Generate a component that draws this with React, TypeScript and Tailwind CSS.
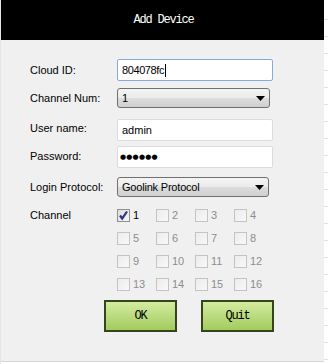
import React from "react";

const mono = { fontFamily: '"Liberation Mono", "DejaVu Sans Mono", monospace' };
const sans = { fontFamily: '"Liberation Sans", Arial, sans-serif' };

function Arrow() {
  return (
    <svg width="9" height="5" viewBox="0 0 9 5" className="shrink-0">
      <path d="M0 0 L9 0 L4.5 5 Z" fill="#000" />
    </svg>
  );
}

function Box({ checked }: { checked?: boolean }) {
  return (
    <div
      className={
        "w-[13px] h-[13px] border flex items-center justify-center shrink-0 " +
        (checked
          ? "border-[#8e8f8f] bg-gradient-to-br from-[#dcdcdc] to-[#f7f7f7]"
          : "border-[#c4c4c4] bg-gradient-to-br from-[#ececec] to-[#f8f8f8]")
      }
    >
      {checked && (
        <svg width="11" height="11" viewBox="0 0 11 11">
          <path d="M2 5.5 L4.2 8.5 L9 1.5" fill="none" stroke="#2a3380" strokeWidth="2.2" />
        </svg>
      )}
    </div>
  );
}

function Select({ text, w }: { text: string; w: string }) {
  return (
    <div
      className={
        "h-[20px] " +
        w +
        " border border-[#707070] rounded-[3px] flex items-center justify-between pl-[4px] pr-[4px] bg-[linear-gradient(to_bottom,#f4f4f4_0%,#ebebeb_50%,#dddddd_50%,#cfcfcf_100%)]"
      }
    >
      <span className="text-[11px] text-black tracking-[-0.2px]" style={sans}>
        {text}
      </span>
      <Arrow />
    </div>
  );
}

const lines = Array.from({ length: 22 }, (_, i) => i);

export default function App() {
  const labelCls = "w-[87px] text-[11px] text-black shrink-0";
  return (
    <div className="w-[328px] h-[364px] flex bg-white overflow-hidden" style={sans}>
      <div className="w-[1px] bg-[#e6e6e6]" />
      <div className="w-[323px] flex flex-col">
        <div className="h-[40px] bg-black flex items-center justify-center">
          <span className="text-white text-[12px] tracking-[-1.2px] pl-[2px]" style={mono}>
            Add Device
          </span>
        </div>
        <div className="h-[321px] bg-[#f0f0f0] flex flex-col pl-[29px]">
          {/* Cloud ID */}
          <div className="flex items-center mt-[19px]">
            <div className={labelCls}>Cloud ID:</div>
            <div className="w-[156px] h-[22px] border border-[#86abd9] rounded-[2px] bg-white flex items-center pl-[4px]">
              <span className="text-[11px] text-black tracking-[-0.4px]">804078fc</span>
              <span className="w-[1px] h-[13px] bg-black ml-[1px]" />
            </div>
          </div>
          {/* Channel Num */}
          <div className="flex items-center mt-[7px]">
            <div className={labelCls}>Channel Num:</div>
            <Select text="1" w="w-[153px]" />
          </div>
          {/* User name */}
          <div className="flex items-center mt-[11px]">
            <div className={labelCls + " -mt-[3px]"}>User name:</div>
            <div className="w-[156px] h-[22px] border border-[#dcdcdc] rounded-[2px] bg-white flex items-center pl-[4px]">
              <span className="text-[11px] text-black">admin</span>
            </div>
          </div>
          {/* Password */}
          <div className="flex items-center mt-[5px]">
            <div className={labelCls + " -mt-[2px]"}>Password:</div>
            <div className="w-[156px] h-[22px] border border-[#dcdcdc] rounded-[2px] bg-white flex items-center pl-[2px]">
              <span
                className="text-[7px] text-black tracking-[0.2px]"
                style={{ fontFamily: '"DejaVu Sans", sans-serif' }}
              >
                ●●●●●●
              </span>
            </div>
          </div>
          {/* Login Protocol */}
          <div className="flex items-center mt-[9px]">
            <div className={labelCls}>Login Protocol:</div>
            <Select text="Goolink Protocol" w="w-[152px]" />
          </div>
          {/* Channel */}
          <div className="flex mt-[12px]">
            <div className={labelCls + " -mt-[2px]"}>Channel</div>
            <div className="grid grid-cols-[repeat(4,39px)] gap-y-[10px]">
              {Array.from({ length: 16 }, (_, i) => (
                <div key={i} className="flex items-center h-[13px]">
                  <Box checked={i === 0} />
                  <span
                    className={
                      "text-[11px] ml-[3px] " + (i === 0 ? "text-black" : "text-[#8d8d8d]")
                    }
                  >
                    {i + 1}
                  </span>
                </div>
              ))}
            </div>
          </div>
          {/* Buttons */}
          <div className="flex mt-[9px] ml-[74px] gap-[24px]">
            {["OK", "Quit"].map((t) => (
              <div
                key={t}
                className="w-[73px] h-[32px] border-2 border-[#35441a] bg-gradient-to-b from-[#d3eb9f] to-[#a2cc5c] flex items-center justify-center"
              >
                <span className="text-[12px] text-black tracking-[-1.2px]" style={mono}>
                  {t}
                </span>
              </div>
            ))}
          </div>
        </div>
        <div className="h-[3px] bg-white border-t border-[#d6d6d6]" />
      </div>
      <div className="w-[4px] flex flex-col bg-white pt-[3px]">
        {lines.map((i) => (
          <div key={i} className="h-[17px] border-b border-[#e2e2e2] shrink-0" />
        ))}
      </div>
    </div>
  );
}
